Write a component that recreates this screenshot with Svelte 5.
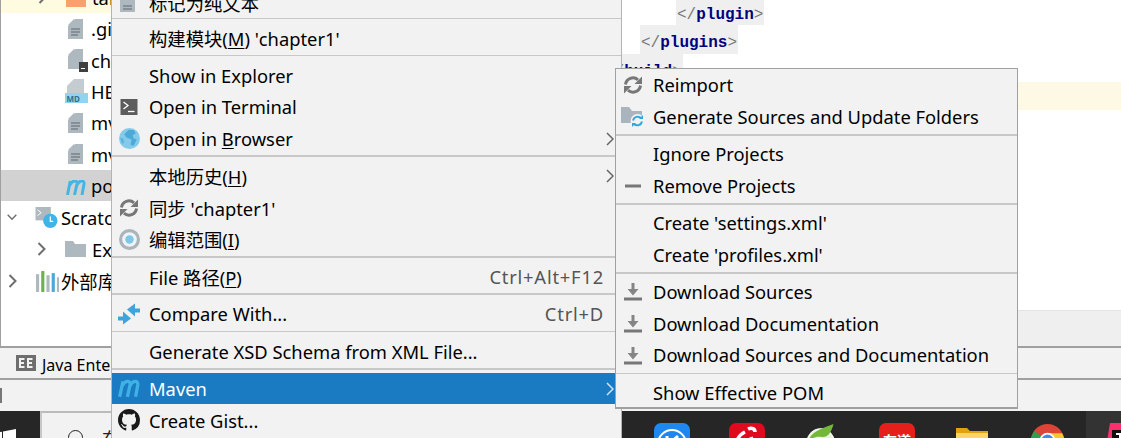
<script>
const left = [
  {sep:true},
  {label:'构建模块(', u:'M', rest:") 'chapter1'"},
  {sep:true},
  {label:'Show in Explorer'},
  {label:'Open in Terminal', icon:'term'},
  {label:'Open in ', u:'B', rest:'rowser', icon:'globe', arrow:true},
  {sep:true},
  {label:'本地历史(', u:'H', rest:')', arrow:true},
  {label:"同步 'chapter1'", icon:'sync'},
  {label:'编辑范围(', u:'I', rest:')', icon:'scope'},
  {sep:true},
  {label:'File 路径(', u:'P', rest:')', key:'Ctrl+Alt+F12'},
  {sep:true},
  {label:'Compare With...', key:'Ctrl+D', icon:'cmp'},
  {sep:true},
  {label:'Generate XSD Schema from XML File...'},
  {sep:true},
  {label:'Maven', icon:'m', arrow:true, active:true},
  {label:'Create Gist...', icon:'gh'}
];
const right = [
  {label:'Reimport', icon:'sync'},
  {label:'Generate Sources and Update Folders', icon:'gen'},
  {sep:true},
  {label:'Ignore Projects'},
  {label:'Remove Projects', icon:'minus'},
  {sep:true},
  {label:"Create 'settings.xml'"},
  {label:"Create 'profiles.xml'"},
  {sep:true},
  {label:'Download Sources', icon:'dl'},
  {label:'Download Documentation', icon:'dl'},
  {label:'Download Sources and Documentation', icon:'dl'},
  {sep:true},
  {label:'Show Effective POM'}
];
const tree = [
  {n:'.gi',icon:'file'},{n:'ch',icon:'term-file'},{n:'HE',icon:'md'},{n:'mv',icon:'file'},{n:'mv',icon:'file'},{n:'po',icon:'mlogo',sel:true}
];
</script>

{#snippet ic(k)}
  {#if k==='sync'}
    <svg class="i" viewBox="0 0 20 20"><path d="M2.500 9.500a7.500 7.500 0 0 1 12.500-4.700" fill="none" stroke="#777" stroke-width="3"/><path d="M11.500 9H19V1.500z" fill="#777"/><path d="M17.500 10.500a7.500 7.500 0 0 1-12.500 4.700" fill="none" stroke="#777" stroke-width="3"/><path d="M8.500 11H1v7.500z" fill="#777"/></svg>
  {:else if k==='term'}
    <svg class="i" viewBox="0 0 20 20"><rect x="1.500" y="2" width="17" height="16" fill="#5c5c5c"/><path d="M4.500 5l4.500 3.500-4.500 3.500" fill="none" stroke="#fff" stroke-width="1.300"/><path d="M9 14.500h6.500" stroke="#fff" stroke-width="1.300"/></svg>
  {:else if k==='globe'}
    <svg class="i lg" viewBox="0 0 20 20"><circle cx="10" cy="10" r="10" fill="#84cbea"/><path d="M9 2h5l2 3-3 2 1 3 3 1-3 6-3-1 1-5-5-2-2-3z" fill="#4ea9d8"/><path d="M1 9l3 1 1 4-2 1z" fill="#5db3dd"/></svg>
  {:else if k==='scope'}
    <svg class="i lg" viewBox="0 0 20 20"><circle cx="10" cy="10" r="8.500" fill="none" stroke="#aab4bb" stroke-width="3"/><circle cx="10" cy="10" r="4" fill="#7cc8ea"/></svg>
  {:else if k==='cmp'}
    <svg class="i xl" viewBox="0 0 22 21"><path d="M9 6L17 0V5H22V9H17V13z" fill="#3fa3dc"/><path d="M13 15L5 8V13H0V17H5V21z" fill="#3fa3dc"/></svg>
  {:else if k==='m'}
    <svg class="i xl" viewBox="0 0 20 20"><path d="M1.500 18L4.500 4M4 8C6 3 11.500 2.500 11 7L8.500 18M11 8c2-5 7.500-5.500 7 -1L16 18" fill="none" stroke="#3fb1e4" stroke-width="3"/></svg>
  {:else if k==='mlogo'}
    <svg class="mlogo" viewBox="0 0 20 15"><path d="M1.500 15L4.300 1M4 5C6 0 11.500-.500 11 4L8.500 15M11 5c2-5 7.500-5.500 7-1L16 15" fill="none" stroke="#45b5e2" stroke-width="3"/></svg>
  {:else if k==='gh'}
    <svg class="i xl" viewBox="0 0 16 16"><path fill="#1a1a1a" d="M8 0C3.580 0 0 3.580 0 8c0 3.540 2.290 6.530 5.470 7.590.4.070.55-.17.55-.38 0-.19-.01-.82-.01-1.490-2.010.37-2.530-.49-2.690-.94-.09-.23-.48-.94-.82-1.130-.28-.15-.68-.52-.01-.53.63-.01 1.080.58 1.230.82.72 1.210 1.870.87 2.330.66.07-.52.28-.87.51-1.070-1.780-.2-3.640-.89-3.640-3.950 0-.87.31-1.590.82-2.150-.08-.2-.36-1.020.08-2.120 0 0 .67-.21 2.200.82.64-.18 1.320-.27 2-.27s1.360.09 2 .27c1.530-1.040 2.200-.82 2.200-.82.44 1.100.16 1.920.08 2.120.51.56.82 1.270.82 2.150 0 3.070-1.870 3.750-3.650 3.950.29.25.54.73.54 1.480 0 1.070-.01 1.930-.01 2.200 0 .21.15.46.55.38A8.010 8.010 0 0 0 16 8c0-4.420-3.580-8-8-8z"/></svg>
  {:else if k==='gen'}
    <svg class="i gen" viewBox="0 0 24 21"><path d="M0 0h8l3 4h10v12H0z" fill="#aab4bc"/><circle cx="16.500" cy="14" r="7" fill="#f2f2f2"/><path d="M12 13.500a4.800 4.800 0 0 1 8-2.500M21 14.500a4.800 4.800 0 0 1-8 2.500" fill="none" stroke="#2ea8e0" stroke-width="2"/><path d="M18 12h4V8zM15 16h-4v4z" fill="#2ea8e0"/></svg>
  {:else if k==='minus'}
    <svg class="i" viewBox="0 0 20 20"><rect x="2" y="8.500" width="16" height="3" fill="#777"/></svg>
  {:else if k==='dl'}
    <svg class="i" viewBox="0 0 20 20"><path d="M8.500 1h3v6h4l-5.500 6.500L4.500 7h4z" fill="#858585"/><rect x="1" y="15.500" width="18" height="3" fill="#777"/></svg>
  {:else if k==='file'}
    <svg class="fi" viewBox="0 0 16 20"><path d="M7 0h8v20H0V7z" fill="#aeb8bf"/><path d="M0 6l6-6v6z" fill="#aeb8bf"/><path d="M3 10h9M3 13h9M3 16h7" stroke="#5e666c" stroke-width="1"/></svg>
  {:else if k==='term-file'}
    <svg class="fi tf" viewBox="0 0 20 23"><path d="M7 0h8v20H0V7z" fill="#aeb8bf"/><path d="M0 6l6-6v6z" fill="#aeb8bf"/><rect x="11" y="13" width="9" height="10" fill="#3f3f3f"/><path d="M13 19.500h4" stroke="#fff"/></svg>
  {:else if k==='md'}
    <svg class="fi md" viewBox="0 0 23 24"><path d="M9 0h10v14H2V7z" fill="#c5ccd1"/><rect x="0" y="14" width="23" height="10" fill="#8fd5f2"/><text x="1.500" y="22.500" class="md-t">MD</text></svg>
  {/if}
{/snippet}

{#snippet chevR(c)}
  <svg class="chev {c}" viewBox="0 0 10 14"><path d="M1.500 1l6 6-6 6" fill="none" stroke="#6e6e6e" stroke-width="2"/></svg>
{/snippet}

{#snippet row(it)}
  {#if it.sep}
    <div class="sep"></div>
  {:else}
    <div class="row" class:active={it.active}>
      <span class="ic">{#if it.icon}{@render ic(it.icon)}{/if}</span>
      <span class="lbl">{it.label}{#if it.u}<u>{it.u}</u>{it.rest}{/if}</span>
      {#if it.key}<span class="key">{it.key}</span>{/if}
      {#if it.arrow}<svg class="arrow" viewBox="0 0 8 14"><path d="M1 1l6 6-6 6" fill="none" stroke="currentColor" stroke-width="1.500"/></svg>{/if}
    </div>
  {/if}
{/snippet}

<div class="page">
  <div class="top">
    <aside class="tree">
      <div class="t-row hl">{@render chevR('c0')}<span class="orange"></span><span>tar</span></div>
      {#each tree as f}
        <div class="t-row file" class:sel={f.sel}>
          <span class="slot">{@render ic(f.icon)}</span>
          <span>{f.n}</span>
        </div>
      {/each}
      <div class="t-row l1 scr-row">
        <svg class="chev down" viewBox="0 0 14 10"><path d="M1 2l6 6 6-6" fill="none" stroke="#6e6e6e" stroke-width="2"/></svg>
        <svg class="scr" viewBox="0 0 23 22"><rect x="0" y="0" width="16" height="14" fill="#aeb8bf"/><path d="M2 3l4 3-4 3" fill="none" stroke="#fff"/><circle cx="15.500" cy="14.500" r="7.500" fill="#3fb4e6"/><path d="M15.500 10v5h3" fill="none" stroke="#fff" stroke-width="1.300"/></svg>
        <span>Scrato</span>
      </div>
      <div class="t-row l2">
        {@render chevR('')}
        <svg class="fo" viewBox="0 0 21 16"><path d="M0 0h8l2 3h11v13H0z" fill="#aeb8bf"/></svg>
        <span>Ex</span>
      </div>
      <div class="t-row l1 lib">
        {@render chevR('')}
        <svg class="scr" viewBox="0 0 22 20"><rect x="0" y="3" width="3" height="17" fill="#aeb8bf"/><rect x="5" y="0" width="3" height="20" fill="#6cb24c"/><rect x="10" y="4" width="3" height="16" fill="#aeb8bf"/><rect x="15" y="2" width="3" height="18" fill="#4ea6d4"/><rect x="20" y="6" width="2" height="14" fill="#aeb8bf"/></svg>
        <span>外部库</span>
      </div>
    </aside>
    <main class="editor">
      <div class="code in2"><span class="tag">&lt;/<b>plugin</b>&gt;</span></div>
      <div class="code in1"><span class="tag">&lt;/<b>plugins</b>&gt;</span></div>
      <div class="code in0"><span class="tag">&lt;/<b>build</b>&gt;</span></div>
      <div class="caret-line"></div>
      <div class="gap"></div>
      <div class="ed-foot"></div>
    </main>
  </div>
  <div class="status">
    <svg class="ee" viewBox="0 0 20 16"><rect width="20" height="16" fill="#6e6e6e"/><path d="M3 3h5.500v2H5v2h3v2H5v2h3.500v2H3zM11 3h5.500v2H13v2h3v2h-3v2h3.500v2H11z" fill="#f2f2f2"/></svg>
    <span>Java Enterprise</span>
  </div>
  <div class="bar2"><i></i></div>
  <div class="taskbar">
    <div class="start"><svg class="win" viewBox="0 0 16 10"><path d="M0 3l2-.3V10H0zM3 2.500L16 0v10H3z" fill="#fff"/></svg></div>
    <div class="search"><span class="mag"></span><span class="st">在</span></div>
    <div class="apps">
      <span class="slot2"><svg class="app" viewBox="0 0 36 36"><rect width="36" height="36" rx="7" fill="#1e88f0"/><circle cx="18" cy="21" r="14" fill="none" stroke="#fff" stroke-width="2"/><path d="M13 13v16M24 13l-9 8 9 8" fill="none" stroke="#fff" stroke-width="3"/></svg></span>
      <span class="slot2"><svg class="app" viewBox="0 0 36 36"><rect width="36" height="36" rx="7" fill="#e00a1e"/><path d="M8 20c0-5 4-9 8-11M19 6c4-2 7 0 7 3M14 32c-4-4-2-12 3-16M22 14l3 10M18 20h10" fill="none" stroke="#fff" stroke-width="3.500"/></svg></span>
      <span class="slot2"><svg class="app round" viewBox="0 0 36 36"><circle cx="16" cy="20" r="15" fill="#e8f4d8" stroke="#fff" stroke-width="1"/><path d="M3 18C5 8 20 4 30 0c-2 8-6 16-14 14-6-1-9 2-13 4z" fill="#74b83a"/><circle cx="16" cy="22" r="7" fill="#fff"/></svg></span>
      <span class="slot2"><span class="app yd">有道</span></span>
      <span class="slot2"><svg class="app fold" viewBox="0 0 32 22"><path d="M0 0h11l3 3h18v19H0z" fill="#e0a30e"/><path d="M0 5h32v17H0z" fill="#fcd462"/></svg></span>
      <span class="slot2"><svg class="app round" viewBox="0 0 36 36"><circle cx="18" cy="18" r="18" fill="#db4437"/><path d="M18 18L2 30A18 18 0 0 1 4 8z" fill="#2f9e4f"/><path d="M18 10h16a18 18 0 0 1-6 24z" fill="#f7c52c"/><circle cx="18" cy="18" r="8.500" fill="#fff"/><circle cx="18" cy="18" r="6.500" fill="#4688f1"/></svg></span>
      <span class="slot2 cur"><svg class="app" viewBox="0 0 36 36"><path d="M6 0H36V36H0z" fill="#fb2f6e"/><rect x="8" y="7" width="22" height="22" fill="#111"/><rect x="12" y="10" width="8" height="2" fill="#fff"/><rect x="15" y="10" width="2.500" height="9" fill="#fff"/><rect x="12" y="17" width="8" height="2" fill="#fff"/></svg></span>
    </div>
  </div>
  <div class="menu m1">
    <div class="row clip"><span class="ic"><svg class="i" viewBox="0 0 20 20"><path d="M1 0h15v19H1z" fill="#aeb8bf"/><path d="M4 13h9M4 16h9" stroke="#5e666c"/></svg></span><span class="lbl">标记为纯文本</span></div>
    {#each left as it}{@render row(it)}{/each}
  </div>
  <div class="menu m2">
    {#each right as it}{@render row(it)}{/each}
  </div>
</div>

<style>
:global(body){margin:0;background:#fff}
.page{position:relative;width:1121px;height:438px;overflow:hidden;font-family:"Noto Sans","Noto Sans CJK SC",sans-serif;font-size:18.33px;color:#000;display:flex;flex-direction:column}
.top{height:346px;display:flex;flex:none}
.tree{width:112px;box-sizing:border-box;border-left:1px solid #a0a0a0;height:346px;flex:none;background:#fff;overflow:hidden}
.t-row{display:flex;align-items:center;height:32px;white-space:nowrap}
.hl{background:#fffbe0;margin-top:-19px;padding-left:37px;box-sizing:border-box}
.c0{margin-right:18px}
.hl>span:last-child{margin-left:6px}
.orange{display:inline-block;width:20px;height:16px;background:#f9a06d;flex:none;margin-top:3px}
.file{padding-left:64px;height:31.4px}
.slot{width:26px;display:flex;align-items:center;flex:none}
.sel{background:#d2d2d2}
.fi{width:16px;height:20px;flex:none;margin-left:3px}
.tf{width:20px;height:23px}
.md{width:23px;height:24px;margin-left:0}
.mlogo{width:20px;height:15px;margin-left:1px;margin-top:4px}
.l1{padding-left:7px}
.l1 .chev{margin-right:18px}
.down{width:13px;height:10px;margin-left:-1px}
.scr-row .chev{margin-right:18px}
.l1 .scr{margin-right:3px}
.lib .scr{margin-right:2px}
.l2{padding-left:36px}
.l2 .chev{margin-right:18px}
.chev{width:10px;height:14px;flex:none}
.scr{width:23px;height:21px;flex:none}
.fo{width:21px;height:16px;flex:none;margin-right:6px}
.editor{flex:1;background:#fff;margin-left:510px;display:flex;flex-direction:column;overflow:hidden}
.code{font-family:"Liberation Mono",monospace;font-size:16px;height:28.500px;line-height:36px;white-space:nowrap;flex:none}
.in2{padding-left:54px;margin-top:-3.500px}
.in1{padding-left:18px}
.in0{margin-left:-18px}
.code .tag{background:#efefef;padding:0 1px;color:#777;display:inline-block;height:28.500px;overflow:hidden;vertical-align:top}
.code b{color:#000080}
.caret-line{height:28px;background:#fef9e4;flex:none}
.gap{flex:1;min-height:0}
.ed-foot{height:35px;background:#efefef;border-top:1px solid #e4e4e4;flex:none}
.status{flex:none;height:34px;background:#f2f2f2;border-top:2px solid #a0a0a0;border-bottom:2px solid #a0a0a0;box-sizing:border-box;display:flex;align-items:center;gap:6px;padding:4px 0 0 16px;font-size:16px}
.ee{width:20px;height:16px;margin-top:-4px}
.bar2{flex:none;height:31px;background:#f2f2f2}
.bar2 i{display:block;width:2px;height:15px;background:#777;margin-top:8px}
.taskbar{flex:1;background:#262626;display:flex;min-height:0}
.start{width:40px;flex:none}
.win{display:block;width:16px;height:10px;margin-top:18px}
.search{width:582px;flex:none;background:#f2f2f2;border-top:2px solid #bbb;border-left:2px solid #c8c8c8;box-sizing:border-box;display:flex;align-items:flex-start;padding-left:26px;overflow:hidden}
.mag{width:13px;height:13px;border:1.500px solid #222;border-radius:50%;margin-top:17px;flex:none}
.st{color:#222;font-size:18px;line-height:24px;margin:14px 0 0 19px}
.apps{flex:1;display:flex;padding-left:12.500px;min-width:0}
.slot2{width:75px;flex:none;display:flex;justify-content:center;align-items:flex-start;padding-top:12px;box-sizing:border-box}
.slot2.cur{background:#333;margin-left:1.500px;padding-left:18px;justify-content:flex-start}
.app{display:block;width:36px;height:36px;flex:none}
.app.round{width:33px;height:33px;margin-top:1px}
.app.fold{width:32px;height:22px;margin-top:5px}
.yd{background:#e5201a;color:#fff;font-size:14px;text-align:center;border-radius:7px;line-height:36px;font-weight:700}

.menu{position:absolute;background:#f2f2f2;box-sizing:border-box;white-space:nowrap}
.m1{left:111px;top:0;width:511px;height:438px;overflow:hidden;border-left:1px solid #b4b4b4;border-right:1px solid #b4b4b4}
.m2{left:615px;top:68px;width:403px;height:341px;border:1px solid #a0a0a0;border-bottom-width:2px;padding-top:.6px}
.m2 .lbl{margin-top:-2px}
.row{display:flex;align-items:center;height:31.700px;position:relative}
.clip{height:30px;margin-top:-13.500px;padding-top:2px;box-sizing:border-box}
.sep{height:1.600px;margin:1px 0 3px;background:#c8c8c8}
.ic{width:37px;display:flex;justify-content:center;flex:none}
.i{width:20px;height:20px;display:block;margin-left:-3px;flex:none}
.i.lg{width:21px;height:21px}
.i.xl{width:22px;height:22px}
.i.gen{width:24px;height:21px}
.lbl{flex:1}
.key{color:#555;margin-right:17px;letter-spacing:.8px}
.arrow{position:absolute;right:7px;top:9px;width:8px;height:14px;color:#666}
.active{background:#1a7bc3;color:#fff}
.active .arrow{color:#cfe3f2}
.md-t{font:bold 8px "Noto Sans",sans-serif;fill:#3a6d86}
u{text-decoration-thickness:1px;text-underline-offset:2px}
</style>
